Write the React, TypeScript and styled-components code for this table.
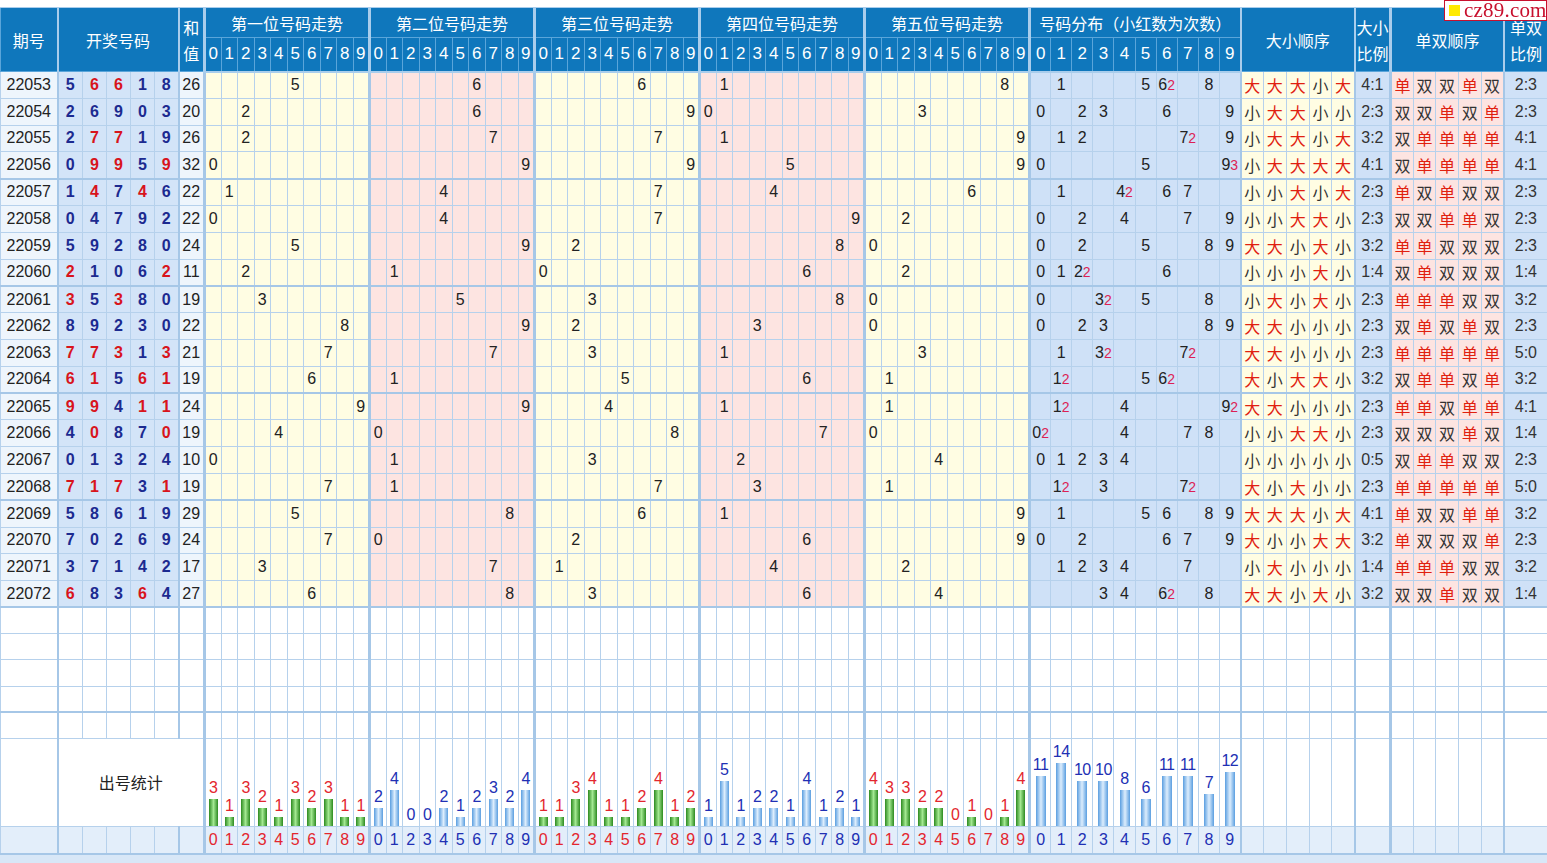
import React from "react";
import styled, { createGlobalStyle, css } from "styled-components";

const RAW: [string, string][] = [
  ["22053", "56618"],
  ["22054", "26903"],
  ["22055", "27719"],
  ["22056", "09959"],
  ["22057", "14746"],
  ["22058", "04792"],
  ["22059", "59280"],
  ["22060", "21062"],
  ["22061", "35380"],
  ["22062", "89230"],
  ["22063", "77313"],
  ["22064", "61561"],
  ["22065", "99411"],
  ["22066", "40870"],
  ["22067", "01324"],
  ["22068", "71731"],
  ["22069", "58619"],
  ["22070", "70269"],
  ["22071", "37142"],
  ["22072", "68364"],
];

const DRAWS = RAW.map(([issue, s]) => ({ issue, nums: s.split("").map(Number) }));

const TITLES = ["第一位号码走势", "第二位号码走势", "第三位号码走势", "第四位号码走势", "第五位号码走势"];
const DIGITS = [0, 1, 2, 3, 4, 5, 6, 7, 8, 9];

// colours
const YELLOW = "#fffde3";
const PINK = "#fde4e1";
const BLUE = "#cfe1f7";
const NUM_BG = "#d3e4f8";
const LIGHT = "#eef5fc";
const FOOT = "#e3eefa";
const RED = "#d8141c";
const NAVY = "#1c2a90";
const LABEL_RED = "#e3262e";
const LABEL_BLUE = "#2130b4";

const GROUP_BG = [YELLOW, PINK, YELLOW, PINK, YELLOW];

// column widths: 期号, 5 numbers, 和值, 50 trend, 10 distribution, 5 size, ratio, 5 odd, ratio
const COL_W: number[] = [
  57,
  25, 24, 24, 24, 24,
  26,
  ...Array(50).fill(16.5),
  ...Array(10).fill(21.1),
  ...Array(5).fill(22.8),
  36,
  ...Array(5).fill(22.6),
  44,
];

const THICK = [7, 17, 27, 37, 47, 57, 73];
const MEDIUM = [1, 6, 67, 72, 78];
const leftW = (i: number) => (THICK.includes(i) ? 3 : MEDIUM.includes(i) ? 2 : 1);

// stats per position and distribution
const posCounts = [0, 1, 2, 3, 4].map((p) =>
  DIGITS.map((d) => DRAWS.filter((r) => r.nums[p] === d).length)
);
const distCounts = DIGITS.map((d) =>
  DRAWS.reduce((acc, r) => acc + r.nums.filter((n) => n === d).length, 0)
);

const GlobalStyle = createGlobalStyle`
  html, body {
    margin: 0;
    padding: 0;
    background: #fff;
  }
  body {
    padding-top: 7px;
    overflow: hidden;
    font-family: "Liberation Sans", "Noto Sans CJK SC", Arial, sans-serif;
    color: #222;
  }
`;

const Badge = styled.div`
  position: fixed;
  top: 0;
  right: 0;
  width: 103px;
  height: 21px;
  box-sizing: border-box;
  display: flex;
  align-items: center;
  gap: 4px;
  padding-left: 4px;
  background: #fff;
  border: 1px solid #c8102e;
  z-index: 5;
`;

const BadgeMark = styled.span`
  width: 11px;
  height: 11px;
  background: #ffea00;
  flex-shrink: 0;
`;

const BadgeText = styled.span`
  font-family: "Liberation Serif", "Times New Roman", serif;
  font-size: 21px;
  line-height: 19px;
  color: #c8102e;
  letter-spacing: 0.2px;
`;

const Chart = styled.table`
  width: 1547px;
  table-layout: fixed;
  border-collapse: collapse;
  font-size: 16px;
`;

const Col = styled.col<{ $w: number }>`
  width: ${(p) => p.$w}px;
`;

const HeadTop = styled.tr`
  height: 30px;
`;

const HeadDigits = styled.tr`
  height: 34px;
`;

const Th = styled.th<{ $lw?: number; $stack?: boolean }>`
  background: #0f77bc;
  color: #fff;
  font-weight: 400;
  font-size: 16px;
  font-family: "Noto Sans CJK SC", "Liberation Sans", sans-serif;
  padding: 0;
  border: 1px solid #5aa5da;
  border-top-color: #a9cdec;
  border-left-width: ${(p) => p.$lw ?? 1}px;
  border-left-color: ${(p) => ((p.$lw ?? 1) > 1 ? "#a9cdec" : "#5aa5da")};
  white-space: nowrap;
  overflow: hidden;
  text-align: center;
  line-height: ${(p) => (p.$stack ? "26px" : "normal")};
`;

const DigitTh = styled(Th)`
  font-family: "Liberation Sans", Arial, sans-serif;
  font-size: 17px;
  border-bottom: 2px solid #a9cdec;
`;

const Row = styled.tr<{ $h: number; $sep?: boolean }>`
  height: ${(p) => p.$h}px;
  ${(p) =>
    p.$sep &&
    css`
      & > td {
        border-bottom-width: 2px;
        border-bottom-color: #a6c7e7;
      }
    `}
`;

const Cell = styled.td<{ $lw?: number; $bg?: string; $color?: string; $bold?: boolean }>`
  padding: 0;
  text-align: center;
  white-space: nowrap;
  overflow: hidden;
  font-size: 16px;
  line-height: 18px;
  border: 1px solid #b6d1ec;
  border-left-width: ${(p) => p.$lw ?? 1}px;
  border-left-color: ${(p) => ((p.$lw ?? 1) > 1 ? "#a6c7e7" : "#b6d1ec")};
  background: ${(p) => p.$bg ?? "#fff"};
  color: ${(p) => p.$color ?? "#222"};
  font-weight: ${(p) => (p.$bold ? 700 : 400)};
`;

const HanCell = styled(Cell)`
  font-family: "Noto Sans CJK SC", "Liberation Sans", sans-serif;
  font-size: 16px;
`;

const Times = styled.span`
  color: #dc1f55;
  font-size: 14px;
`;

const StatTitle = styled(Cell)`
  font-family: "Noto Sans CJK SC", "Liberation Sans", sans-serif;
  font-size: 16px;
  vertical-align: middle;
`;

const StatCell = styled(Cell)`
  vertical-align: bottom;
  overflow: visible;
`;

const StatLabel = styled.div<{ $color: string }>`
  color: ${(p) => p.$color};
  font-size: 16px;
  line-height: 16px;
  margin-bottom: 3px;
  letter-spacing: -0.5px;
`;

const Bar = styled.div<{ $h: number; $w: number; $tone: "green" | "blue" }>`
  width: ${(p) => p.$w}px;
  height: ${(p) => p.$h}px;
  margin: 0 auto;
  background: ${(p) =>
    p.$tone === "green"
      ? "linear-gradient(to right, #2c8a20 0%, #a3e891 50%, #2c8a20 100%)"
      : "linear-gradient(to right, #5a9ee0 0%, #dcedfd 50%, #5a9ee0 100%)"};
`;

const Strip = styled.div`
  height: 40px;
  background: #d8e7f7;
`;

const EmptyCells = () => (
  <>
    {COL_W.map((_, i) => (
      <Cell key={i} $lw={leftW(i)} />
    ))}
  </>
);

export default function App() {
  return (
    <>
      <GlobalStyle />
      <Badge>
        <BadgeMark />
        <BadgeText>cz89.com</BadgeText>
      </Badge>
      <Chart>
        <colgroup>
          {COL_W.map((w, i) => (
            <Col key={i} $w={w} />
          ))}
        </colgroup>
        <thead>
          <HeadTop>
            <Th rowSpan={2}>期号</Th>
            <Th rowSpan={2} colSpan={5} $lw={2}>
              开奖号码
            </Th>
            <Th rowSpan={2} $lw={2} $stack>
              和<br />值
            </Th>
            {TITLES.map((t) => (
              <Th key={t} colSpan={10} $lw={3}>
                {t}
              </Th>
            ))}
            <Th colSpan={10} $lw={3}>
              号码分布（小红数为次数）
            </Th>
            <Th rowSpan={2} colSpan={5} $lw={2}>
              大小顺序
            </Th>
            <Th rowSpan={2} $lw={2} $stack>
              大小<br />比例
            </Th>
            <Th rowSpan={2} colSpan={5} $lw={3}>
              单双顺序
            </Th>
            <Th rowSpan={2} $lw={2} $stack>
              单双<br />比例
            </Th>
          </HeadTop>
          <HeadDigits>
            {Array.from({ length: 60 }, (_, k) => (
              <DigitTh key={k} $lw={leftW(7 + k)}>
                {k % 10}
              </DigitTh>
            ))}
          </HeadDigits>
        </thead>
        <tbody>
          {DRAWS.map((d, r) => {
            const sum = d.nums.reduce((a, b) => a + b, 0);
            const big = d.nums.filter((n) => n >= 5).length;
            const odd = d.nums.filter((n) => n % 2 === 1).length;
            return (
              <Row key={d.issue} $h={26.8} $sep={r % 4 === 3}>
                <Cell $bg={LIGHT}>{d.issue}</Cell>
                {d.nums.map((n, i) => (
                  <Cell
                    key={i}
                    $lw={leftW(1 + i)}
                    $bg={NUM_BG}
                    $bold
                    $color={d.nums.filter((m) => m === n).length > 1 ? RED : NAVY}
                  >
                    {n}
                  </Cell>
                ))}
                <Cell $lw={2} $bg={LIGHT}>
                  {sum}
                </Cell>
                {d.nums.map((n, g) =>
                  DIGITS.map((k) => (
                    <Cell key={`${g}-${k}`} $lw={leftW(7 + g * 10 + k)} $bg={GROUP_BG[g]}>
                      {n === k ? k : ""}
                    </Cell>
                  ))
                )}
                {DIGITS.map((k) => {
                  const c = d.nums.filter((n) => n === k).length;
                  return (
                    <Cell key={`d${k}`} $lw={leftW(57 + k)} $bg={BLUE}>
                      {c > 0 ? k : ""}
                      {c > 1 && <Times>{c}</Times>}
                    </Cell>
                  );
                })}
                {d.nums.map((n, i) => (
                  <HanCell key={`s${i}`} $lw={leftW(67 + i)} $bg={YELLOW} $color={n >= 5 ? "#e0200f" : "#333"}>
                    {n >= 5 ? "大" : "小"}
                  </HanCell>
                ))}
                <Cell $lw={2} $bg={BLUE} $color="#333">
                  {big}:{5 - big}
                </Cell>
                {d.nums.map((n, i) => (
                  <HanCell key={`o${i}`} $lw={leftW(73 + i)} $bg={PINK} $color={n % 2 ? "#e0200f" : "#333"}>
                    {n % 2 ? "单" : "双"}
                  </HanCell>
                ))}
                <Cell $lw={2} $bg={BLUE} $color="#333">
                  {odd}:{5 - odd}
                </Cell>
              </Row>
            );
          })}
          {[0, 1, 2, 3].map((r) => (
            <Row key={`e${r}`} $h={26.2} $sep={r === 3}>
              <EmptyCells />
            </Row>
          ))}
          <Row $h={26}>
            <EmptyCells />
          </Row>
          <Row $h={88}>
            <Cell />
            <StatTitle colSpan={6} $lw={2}>
              出号统计
            </StatTitle>
            {posCounts.map((counts, g) =>
              counts.map((c, k) => (
                <StatCell key={`p${g}-${k}`} $lw={leftW(7 + g * 10 + k)}>
                  <StatLabel $color={g % 2 === 0 ? LABEL_RED : LABEL_BLUE}>{c}</StatLabel>
                  <Bar $h={c * 9} $w={9} $tone={g % 2 === 0 ? "green" : "blue"} />
                </StatCell>
              ))
            )}
            {distCounts.map((c, k) => (
              <StatCell key={`dc${k}`} $lw={leftW(57 + k)}>
                <StatLabel $color={LABEL_BLUE}>{c}</StatLabel>
                <Bar $h={c * 4.5} $w={10} $tone="blue" />
              </StatCell>
            ))}
            {Array.from({ length: 12 }, (_, i) => (
              <Cell key={`r${i}`} $lw={leftW(67 + i)} />
            ))}
          </Row>
          <Row $h={28} $sep>
            {COL_W.map((_, i) => {
              const inChart = i >= 7 && i < 67;
              const g = Math.floor((i - 7) / 10);
              const red = inChart && g < 5 && g % 2 === 0;
              return (
                <Cell key={i} $lw={leftW(i)} $bg={FOOT} $color={red ? LABEL_RED : LABEL_BLUE}>
                  {inChart ? (i - 7) % 10 : ""}
                </Cell>
              );
            })}
          </Row>
        </tbody>
      </Chart>
      <Strip />
    </>
  );
}
